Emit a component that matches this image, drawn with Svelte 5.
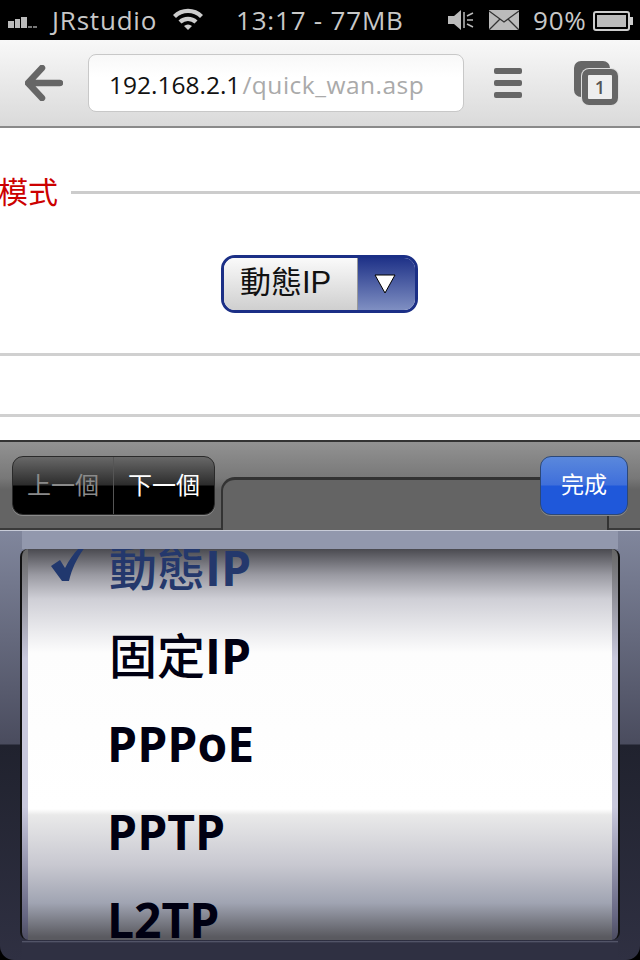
<script>
  const options = [
    { label: '動態', suffix: 'IP', selected: true },
    { label: '固定', suffix: 'IP' },
    { label: '', suffix: 'PPPoE' },
    { label: '', suffix: 'PPTP' },
    { label: '', suffix: 'L2TP' }
  ];
</script>

<div class="phone">
  <header class="status">
    <svg class="signal" width="30" height="16" viewBox="0 0 30 16">
      <rect x="0" y="8" width="6" height="7" fill="#bbb" />
      <rect x="7" y="6" width="5" height="9" fill="#bbb" />
      <rect x="13" y="4" width="6" height="11" fill="#bbb" />
      <rect x="20" y="13" width="4" height="2" fill="#777" />
      <rect x="25" y="13" width="4" height="2" fill="#777" />
    </svg>
    <span class="carrier">JRstudio</span>
    <svg class="wifi" width="32" height="24" viewBox="0 0 32 24">
      <path d="M1 8 A21 21 0 0 1 31 8 L28 11 A17 17 0 0 0 4 11 Z" fill="#ccc" />
      <path d="M6.500 13.500 A14 14 0 0 1 25.500 13.500 L22.500 16.500 A9.500 9.500 0 0 0 9.500 16.500 Z" fill="#ccc" />
      <path d="M12 19 A6 6 0 0 1 20 19 L16 23 Z" fill="#ccc" />
    </svg>
    <span class="clock">13:17 - 77MB</span>
    <svg class="mute" width="26" height="20" viewBox="0 0 26 20">
      <path d="M0 6 H6 L13 0 V20 L6 14 H0 Z" fill="#bbb" />
      <path d="M16 2 V18 M19 6 L25 3 M19 10 H25 M19 14 L25 17" stroke="#bbb" stroke-width="1.500" fill="none" />
    </svg>
    <svg class="mail" width="30" height="20" viewBox="0 0 30 20">
      <rect width="30" height="20" fill="#bbb" />
      <path d="M0 1 L15 12 L30 1 M0 20 L11 9 M30 20 L19 9" stroke="#333" stroke-width="1.300" fill="none" />
    </svg>
    <span class="percent">90%</span>
    <svg class="battery" width="41" height="20" viewBox="0 0 41 20">
      <rect x="1" y="1" width="35" height="18" rx="2" fill="none" stroke="#ccc" stroke-width="2" />
      <rect x="4" y="4" width="29" height="12" fill="#bbb" />
      <rect x="37" y="6" width="3" height="8" fill="#ccc" />
    </svg>
  </header>

  <nav class="toolbar">
    <svg class="back" width="38" height="36" viewBox="0 0 38 36">
      <path d="M17 3 L3 18 L17 33 M4 18 H35" fill="none" stroke="#666" stroke-width="6.500" stroke-linecap="round" stroke-linejoin="round" />
    </svg>
    <div class="url"><span class="host">192.168.2.1</span><span class="path">/quick_wan.asp</span></div>
    <div class="menu"><i></i><i></i><i></i></div>
    <div class="tabs">
      <span class="tab-back"></span>
      <span class="tab-front">1</span>
    </div>
  </nav>

  <main class="page">
    <div class="legend"><span>模式</span><hr /></div>
    <div class="select">
      <span class="select-value">動態IP</span>
      <span class="select-arrow">
        <svg width="24" height="22" viewBox="0 0 24 22">
          <path d="M2 2 H22 L12 20 Z" fill="#fff" stroke="#000" stroke-width="1" />
        </svg>
      </span>
    </div>
    <hr class="rule first" />
    <hr class="rule second" />
  </main>

  <div class="accessory">
    <span class="field-edge"></span>
    <div class="segments">
      <button class="dim">上一個</button>
      <button>下一個</button>
    </div>
    <button class="done">完成</button>
  </div>

  <section class="picker">
    <div class="frame">
      <ul class="list">
        {#each options as option}
          <li class:selected={option.selected} class:plain={!option.label}>
            {#if option.selected}
              <svg class="check" width="36" height="36" viewBox="0 0 36 36">
                <path d="M0 20 L9 14 L14 22 C19 12 25 5 30 0 L35 0 C27 10 21 22 18 35 L11 35 Z" fill="#21386e" />
              </svg>
            {/if}
            {#if option.label}<span class="cjk">{option.label}</span>{/if}{option.suffix}
          </li>
        {/each}
      </ul>
    </div>
  </section>
</div>

<style>
  :global(body) {
    background: #000;
  }

  .phone {
    width: 640px;
    height: 960px;
    overflow: hidden;
    display: flex;
    flex-direction: column;
    font-family: "Open Sans", "Noto Sans CJK TC", sans-serif;
  }

  .status {
    height: 40px;
    flex: none;
    display: flex;
    align-items: center;
    background: #000;
    color: #c8c8c8;
    font-size: 26px;
    font-weight: 500;
    letter-spacing: 0.8px;
    padding-left: 8px;
  }

  .signal { margin-right: 14px; margin-top: 2px; }
  .carrier { width: 120px; }
  .wifi { margin-right: 32px; margin-top: -2px; }
  .clock { width: 212px; }
  .mute { margin-right: 15px; }
  .mail { margin-right: 14px; }
  .percent { width: 60px; }
  .battery { margin-top: 1px; }

  .toolbar {
    height: 88px;
    flex: none;
    box-sizing: border-box;
    display: flex;
    align-items: center;
    background: linear-gradient(#f8f8f8, #dadada);
    border-bottom: 2px solid #8a8a8a;
    padding-left: 25px;
  }

  .back { margin-right: 25px; }

  .url {
    width: 376px;
    height: 58px;
    box-sizing: border-box;
    padding: 2px 0 0 20px;
    display: flex;
    align-items: center;
    background: linear-gradient(#f8f8f8, #fff 40%);
    border: 1px solid #c8c8c8;
    border-radius: 8px;
    font-size: 24.5px;
  }

  .host { color: #111; }
  .path { color: #aaa; margin-left: 2px; letter-spacing: 0.5px; }

  .menu {
    width: 28px;
    margin-left: 30px;
    display: flex;
    flex-direction: column;
    gap: 6px;
  }

  .menu i {
    height: 6px;
    background: #666;
    border-radius: 2px;
  }

  .tabs {
    position: relative;
    width: 44px;
    height: 44px;
    margin-left: 52px;
  }

  .tab-back, .tab-front {
    position: absolute;
    box-sizing: border-box;
    width: 36px;
    height: 36px;
    border: 6px solid #666;
    border-radius: 7px;
  }

  .tab-back { left: 0; top: 0; background: #666; }

  .tab-front {
    left: 8px;
    top: 8px;
    background: #eee;
    box-shadow: 0 0 0 1px #ddd;
    color: #555;
    font-size: 18px;
    font-weight: 600;
    letter-spacing: 0;
    line-height: 24px;
    text-align: center;
  }

  .page {
    height: 312px;
    flex: none;
    background: #fff;
    display: flex;
    flex-direction: column;
  }

  .legend {
    display: flex;
    align-items: center;
    margin-top: 45px;
    margin-left: -2px;
    color: #cc0000;
    font-size: 30px;
    line-height: 38px;
  }

  .legend span { white-space: nowrap; }

  .legend hr {
    flex: 1;
    margin: 0 0 0 13px;
    border: none;
    height: 3px;
    background: #ccc;
  }

  .select {
    align-self: center;
    display: flex;
    width: 197px;
    height: 58px;
    box-sizing: border-box;
    margin: 44px 1px 0 0;
    overflow: hidden;
    border: 3px solid #1b2f86;
    border-radius: 14px;
    font-size: 31px;
    color: #111;
  }

  .select-value {
    width: 134px;
    box-sizing: border-box;
    padding-left: 16px;
    line-height: 50px;
    background: linear-gradient(#fafafa, #cfcfcf);
    border-right: 1px solid #999;
    font-family: "Liberation Sans", "Noto Sans CJK TC", sans-serif;
  }

  .select-arrow {
    flex: 1;
    display: flex;
    align-items: center;
    justify-content: center;
    padding-right: 3px;
    background: linear-gradient(#1f3288, #7f8fc2);
  }

  .rule {
    margin: 0;
    border: none;
    height: 3px;
    background: #d0d0d0;
  }

  .rule.first { margin-top: 40px; }
  .rule.second { margin-top: 58px; }

  .accessory {
    position: relative;
    height: 90px;
    flex: none;
    box-sizing: border-box;
    display: flex;
    justify-content: space-between;
    align-items: flex-start;
    padding: 14px 12px 0;
    border-top: 2px solid #333;
    border-bottom: 2px solid #3a3a3a;
    background: linear-gradient(#929292, #787878 42%, #646464 55%, #646464);
  }

  .field-edge {
    position: absolute;
    left: 221px;
    top: 35px;
    width: 388px;
    height: 53px;
    box-sizing: border-box;
    border: 2px solid #333;
    border-top-width: 3px;
    border-bottom: none;
    border-radius: 14px 12px 0 0;
    background: #646464;
  }

  .segments {
    position: relative;
    display: flex;
    width: 203px;
    height: 59px;
    box-sizing: border-box;
    overflow: hidden;
    border: 1px solid #2a2a2a;
    border-radius: 11px;
    box-shadow: 0 1px 0 #8a8a8a;
    background: linear-gradient(#686868, #2c2c2c 49%, #000 51%);
  }

  .segments button {
    flex: 1;
    background: none;
    border: none;
    padding: 0 0 5px;
    color: #fff;
    font-family: inherit;
    font-size: 24px;
  }

  .segments button.dim {
    color: #8a8a8a;
    border-right: 1px solid #555;
  }

  .done {
    position: relative;
    width: 88px;
    height: 59px;
    box-sizing: border-box;
    padding: 0 0 5px;
    border: 1px solid #2c4878;
    border-radius: 11px;
    box-shadow: 0 1px 0 #8a8a8a;
    background: linear-gradient(#5a88dc, #3f6fdb 49%, #1f58da 51%, #1f58da);
    color: #fff;
    font-family: inherit;
    font-size: 23px;
  }

  .picker {
    flex: 1;
    min-height: 0;
    box-sizing: border-box;
    padding: 18px 20px 20px;
    border-top: 1px solid #c8ccd8;
    border-radius: 0 0 14px 14px;
    background:
      linear-gradient(#9298ad, #9298ad) 22px 0 / 596px 18px no-repeat,
      linear-gradient(#5e6074, #2f3042 2px) 22px 410px / 596px 20px no-repeat,
      linear-gradient(#80869c 0, #4a4c5e 213px, #20222e 214px, #2f3042 100%);
  }

  .frame {
    height: 100%;
    box-sizing: border-box;
    overflow: hidden;
    padding: 0 6px;
    border: solid #111;
    border-width: 0 2px;
    border-radius: 8px;
    background: linear-gradient(#666, #c8c8dc 28%, #c8c8dc 66%, #666682 94%, #4c4c60);
  }

  .list {
    list-style: none;
    margin: -28px 0 0;
    padding: 0 0 0 78px;
    height: 420px;
    background: linear-gradient(
      transparent 28px,
      #4a4a50 28px,
      #9a9aa2 54px,
      #cfcfd6 78px,
      #fdfdfd 132px,
      #fff 288px,
      #e9e9e9 294px,
      #c8c8d0 344px,
      #a0a4b2 382px,
      #5a5a60 416px
    );
    font-size: 48px;
    font-weight: 700;
    color: #000012;
  }

  .list li {
    position: relative;
    height: 88px;
    line-height: 88px;
    white-space: nowrap;
  }

  .list li.plain {
    line-height: 94px;
    padding-left: 1px;
  }

  .list li.selected { color: #24386c; }

  .cjk {
    font-family: "Noto Sans CJK TC", sans-serif;
    font-size: 48px;
    font-weight: 500;
    margin-left: 3px;
  }

  .check {
    position: absolute;
    left: -55px;
    top: 25px;
  }
</style>
